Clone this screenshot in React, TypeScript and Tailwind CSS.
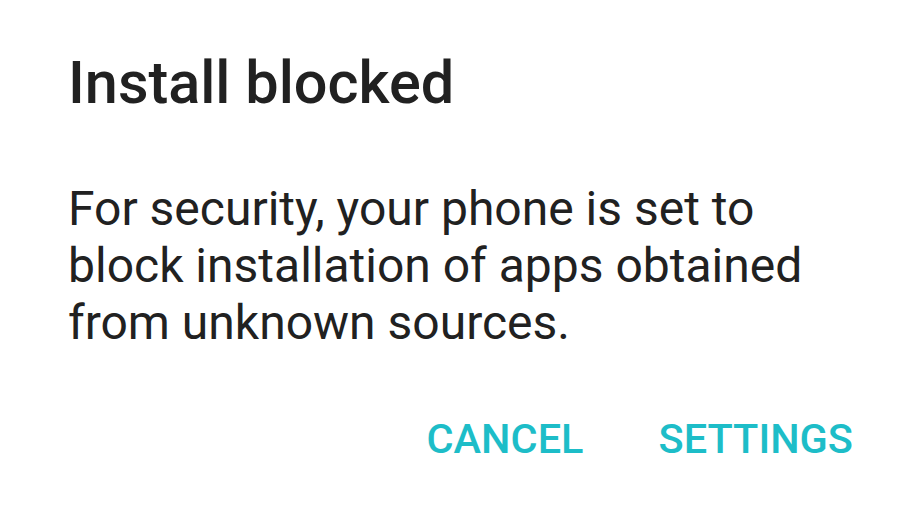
export default function App() {
  return (
    <div
      className="w-[921px] h-[521px] bg-white overflow-hidden"
      style={{ fontFamily: "Roboto, 'Noto Sans', sans-serif" }}
    >
      <div className="pl-[68px] pr-[40px] pt-[45px]">
        <h1 className="text-[59.4px] leading-[76px] font-medium text-[#212121]">
          Install blocked
        </h1>
        <p className="mt-[59px] text-[48px] leading-[57px] text-[#212121]">
          For security, your phone is set to
          <br />
          block installation of apps obtained
          <br />
          from unknown sources.
        </p>
      </div>
      <div className="flex justify-end gap-[75px] pr-[68px] mt-[63px]">
        <span className="text-[41.5px] leading-[50px] font-medium text-[#1dbdc8]">CANCEL</span>
        <span className="text-[41.5px] leading-[50px] font-medium text-[#1dbdc8]">SETTINGS</span>
      </div>
    </div>
  );
}
